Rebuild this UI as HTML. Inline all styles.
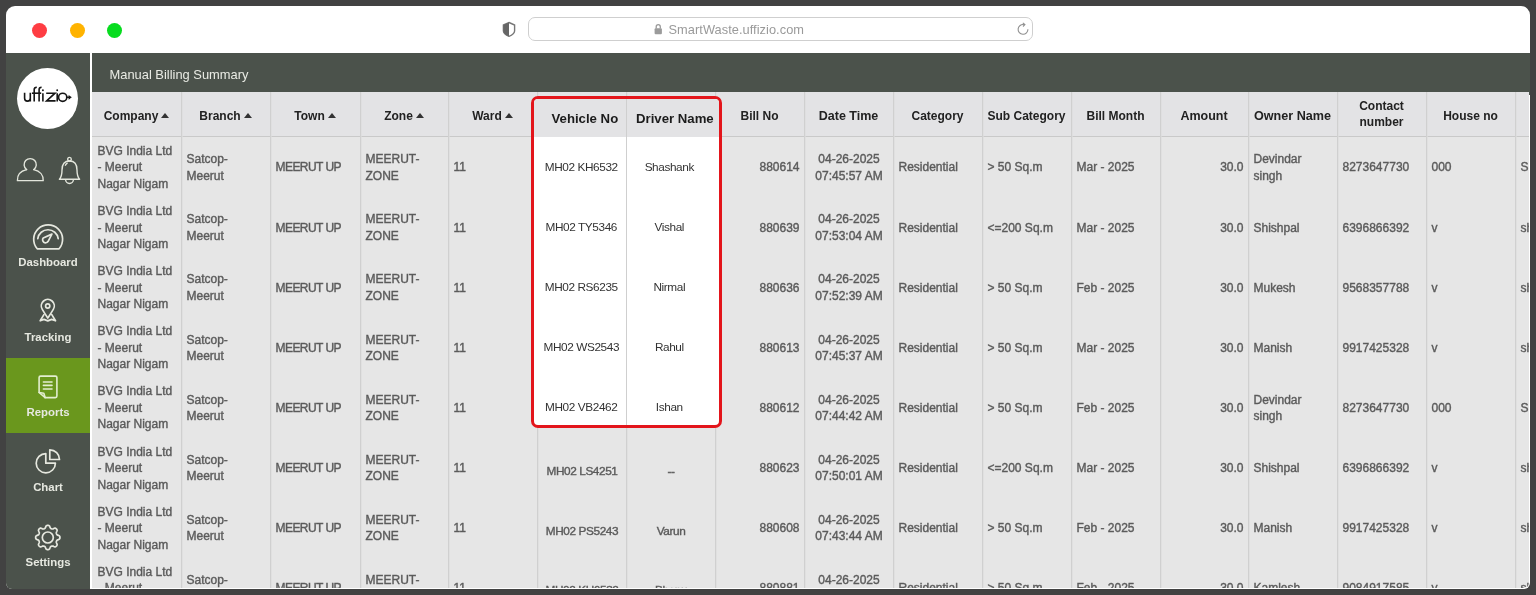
<!DOCTYPE html>
<html><head><meta charset="utf-8">
<style>
*{box-sizing:border-box;margin:0;padding:0}
html,body{width:1536px;height:595px;overflow:hidden;background:#424242;font-family:"Liberation Sans",sans-serif}
.win{position:absolute;left:6px;top:6px;width:1524px;height:583px;background:#fff;border-radius:9px 9px 6px 6px;overflow:hidden}
.abs{position:absolute}
.clip{position:absolute;left:0;top:0;width:1529px;height:588px;overflow:hidden;clip-path:inset(92px 0 0 92px round 0 0 5px 0)}
.dot{position:absolute;width:15px;height:15px;border-radius:50%;top:16.5px}
.url{position:absolute;left:522px;top:11px;width:505px;height:23.5px;border:1.2px solid #cfcfcf;border-radius:7px;background:#fff}
.urltxt{position:absolute;left:668.5px;top:22px;font-size:12.8px;color:#9a9a9a;letter-spacing:0.05px}
.side{position:absolute;left:0;top:47px;width:84px;height:536px;background:#4b524b}
.hbar{position:absolute;left:86px;top:47px;width:1438px;height:42px;background:#4b524b}
.htitle{position:absolute;left:103.5px;top:61px;font-size:12.9px;color:#e9ebe4}
.tbl{position:absolute;left:92px;top:92px;width:1438px;height:497px;background:#e6e6e6}
.thead{position:absolute;left:0;top:0;width:1438px;height:44.5px;background:#e3e3e5;border-bottom:1.5px solid #c9c9c9}
.vs{position:absolute;top:92px;width:1px;height:497px;background:#d0d0d0;box-shadow:0.6px 0 0 #dcdcdc}
.hc{position:absolute;top:94.2px;width:88.9px;height:44px;display:flex;align-items:center;justify-content:center;text-align:center;font-weight:bold;font-size:12px;color:#222;line-height:16.6px}
.arr{display:inline-block;width:0;height:0;border-left:4px solid transparent;border-right:4px solid transparent;border-bottom:5.5px solid #333;margin-left:3px;margin-bottom:2px}
.bc{position:absolute;width:88.9px;height:60px;display:flex;align-items:center;font-size:12px;line-height:16.5px;color:#555;padding:0 5.5px;-webkit-text-stroke:0.4px #626262}
.al{justify-content:flex-start;text-align:left}
.ac{justify-content:center;text-align:center}
.ar{justify-content:flex-end;text-align:right}
.tw{letter-spacing:-0.55px}
.vd{font-size:11.8px;letter-spacing:-0.4px;padding-top:6.5px}
.vd8{padding-top:3px}
.box{position:absolute;left:531px;top:96px;width:191px;height:332px;border:3.2px solid #e3151b;border-radius:7px;background:#fff;overflow:hidden}
.boxh{position:absolute;left:0;top:0;width:100%;height:38px;background:#e3e3e5}
.boxsep{position:absolute;left:92px;top:0;width:1px;height:100%;background:#cfcfcf}
.xh{position:absolute;top:12.1px;font-weight:bold;font-size:13.2px;color:#1c1c1c}
.xb{position:absolute;height:60px;display:flex;align-items:center;justify-content:center;font-size:11.8px;letter-spacing:-0.4px;color:#333}
.nav{position:absolute;left:6px;width:84px;height:75px}
.nav .lbl{position:absolute;left:0;width:84px;text-align:center;top:47.6px;font-weight:bold;font-size:11.4px;color:#e6e8e0}
.nav svg{position:absolute;left:0;top:0}
body>*{filter:blur(0.3px)}
</style></head><body>
<div class="win">
  <div class="dot" style="left:25.5px;background:#fe3d43"></div>
  <div class="dot" style="left:63.5px;background:#ffb300"></div>
  <div class="dot" style="left:101px;background:#07dc1f"></div>
  <div class="url"></div>
  <div class="side"></div>
  <div class="hbar"></div>
</div>
<svg class="abs" style="left:0;top:0" width="1536" height="60">
  <path d="M509 22.5 L514.6 25 L514.6 31 Q514.4 34.3 509 36.3 Q503.6 34.3 503.4 31 L503.4 25 Z" fill="none" stroke="#777" stroke-width="1.4"/>
  <path d="M509 22.5 L503.4 25 L503.4 31 Q503.6 34.3 509 36.3 Z" fill="#666"/>
  <rect x="654.6" y="28.3" width="7.3" height="6" rx="1" fill="#9b9b9b"/>
  <path d="M656.2 28.5 V26.8 A2.05 2.2 0 0 1 660.3 26.8 V28.5" fill="none" stroke="#9b9b9b" stroke-width="1.3"/>
  <path d="M1027.9 29.2 A4.9 4.9 0 1 1 1023.9 24.6" fill="none" stroke="#8f8f8f" stroke-width="1.1"/>
  <path d="M1022.8 22.9 L1024.9 24.6 L1023 26.5" fill="none" stroke="#8f8f8f" stroke-width="1.1"/>
</svg>
<div class="urltxt">SmartWaste.uffizio.com</div>
<div class="htitle" style="left:109.5px;top:67px">Manual Billing Summary</div>
<div class="clip">
<div class="tbl"><div class="thead"></div></div>
<div class="vs" style="left:181px"></div><div class="vs" style="left:270px"></div><div class="vs" style="left:360px"></div><div class="vs" style="left:448px"></div><div class="vs" style="left:537px"></div><div class="vs" style="left:626px"></div><div class="vs" style="left:715px"></div><div class="vs" style="left:804px"></div><div class="vs" style="left:893px"></div><div class="vs" style="left:982px"></div><div class="vs" style="left:1071px"></div><div class="vs" style="left:1160px"></div><div class="vs" style="left:1248px"></div><div class="vs" style="left:1337px"></div><div class="vs" style="left:1426px"></div><div class="vs" style="left:1515px"></div>
<div class="hc" style="left:92px;width:89px">Company<span class="arr"></span></div><div class="hc" style="left:181px;width:89px">Branch<span class="arr"></span></div><div class="hc" style="left:270px;width:90px">Town<span class="arr"></span></div><div class="hc" style="left:360px;width:88px">Zone<span class="arr"></span></div><div class="hc" style="left:448px;width:89px">Ward<span class="arr"></span></div><div class="hc" style="left:715px;width:89px">Bill No</div><div class="hc" style="left:804px;width:89px"><span style="font-size:12.5px">Date Time</span></div><div class="hc" style="left:893px;width:89px">Category</div><div class="hc" style="left:982px;width:89px">Sub Category</div><div class="hc" style="left:1071px;width:89px">Bill Month</div><div class="hc" style="left:1160px;width:88px"><span style="font-size:12.5px">Amount</span></div><div class="hc" style="left:1248px;width:89px"><span style="font-size:12.6px">Owner Name</span></div><div class="hc" style="left:1337px;width:89px;margin-top:-1.8px">Contact<br>number</div><div class="hc" style="left:1426px;width:89px">House no</div><div class="hc" style="left:1515px;width:89px"></div>
<div class="bc al" style="left:92px;width:90px;top:137.7px">BVG India Ltd<br>- Meerut<br>Nagar Nigam</div><div class="bc al" style="left:181px;width:90px;top:137.7px">Satcop-<br>Meerut</div><div class="bc al tw" style="left:270px;width:91px;top:137.7px">MEERUT UP</div><div class="bc al" style="left:360px;width:89px;top:137.7px">MEERUT-<br>ZONE</div><div class="bc al" style="left:448px;width:90px;top:137.7px">11</div><div class="bc ar" style="left:715px;width:90px;top:137.7px">880614</div><div class="bc ac" style="left:804px;width:90px;top:137.7px">04-26-2025<br>07:45:57 AM</div><div class="bc al" style="left:893px;width:90px;top:137.7px">Residential</div><div class="bc al" style="left:982px;width:90px;top:137.7px">&gt; 50 Sq.m</div><div class="bc al" style="left:1071px;width:90px;top:137.7px">Mar - 2025</div><div class="bc ar" style="left:1160px;width:89px;top:137.7px">30.0</div><div class="bc al" style="left:1248px;width:90px;top:137.7px">Devindar<br>singh</div><div class="bc al" style="left:1337px;width:90px;top:137.7px">8273647730</div><div class="bc al" style="left:1426px;width:90px;top:137.7px">000</div><div class="bc al" style="left:1515px;width:90px;top:137.7px">Sh</div><div class="bc al" style="left:92px;width:90px;top:197.8px">BVG India Ltd<br>- Meerut<br>Nagar Nigam</div><div class="bc al" style="left:181px;width:90px;top:197.8px">Satcop-<br>Meerut</div><div class="bc al tw" style="left:270px;width:91px;top:197.8px">MEERUT UP</div><div class="bc al" style="left:360px;width:89px;top:197.8px">MEERUT-<br>ZONE</div><div class="bc al" style="left:448px;width:90px;top:197.8px">11</div><div class="bc ar" style="left:715px;width:90px;top:197.8px">880639</div><div class="bc ac" style="left:804px;width:90px;top:197.8px">04-26-2025<br>07:53:04 AM</div><div class="bc al" style="left:893px;width:90px;top:197.8px">Residential</div><div class="bc al" style="left:982px;width:90px;top:197.8px">&lt;=200 Sq.m</div><div class="bc al" style="left:1071px;width:90px;top:197.8px">Mar - 2025</div><div class="bc ar" style="left:1160px;width:89px;top:197.8px">30.0</div><div class="bc al" style="left:1248px;width:90px;top:197.8px">Shishpal</div><div class="bc al" style="left:1337px;width:90px;top:197.8px">6396866392</div><div class="bc al" style="left:1426px;width:90px;top:197.8px">v</div><div class="bc al" style="left:1515px;width:90px;top:197.8px">sh</div><div class="bc al" style="left:92px;width:90px;top:257.9px">BVG India Ltd<br>- Meerut<br>Nagar Nigam</div><div class="bc al" style="left:181px;width:90px;top:257.9px">Satcop-<br>Meerut</div><div class="bc al tw" style="left:270px;width:91px;top:257.9px">MEERUT UP</div><div class="bc al" style="left:360px;width:89px;top:257.9px">MEERUT-<br>ZONE</div><div class="bc al" style="left:448px;width:90px;top:257.9px">11</div><div class="bc ar" style="left:715px;width:90px;top:257.9px">880636</div><div class="bc ac" style="left:804px;width:90px;top:257.9px">04-26-2025<br>07:52:39 AM</div><div class="bc al" style="left:893px;width:90px;top:257.9px">Residential</div><div class="bc al" style="left:982px;width:90px;top:257.9px">&gt; 50 Sq.m</div><div class="bc al" style="left:1071px;width:90px;top:257.9px">Feb - 2025</div><div class="bc ar" style="left:1160px;width:89px;top:257.9px">30.0</div><div class="bc al" style="left:1248px;width:90px;top:257.9px">Mukesh</div><div class="bc al" style="left:1337px;width:90px;top:257.9px">9568357788</div><div class="bc al" style="left:1426px;width:90px;top:257.9px">v</div><div class="bc al" style="left:1515px;width:90px;top:257.9px">sh</div><div class="bc al" style="left:92px;width:90px;top:318.1px">BVG India Ltd<br>- Meerut<br>Nagar Nigam</div><div class="bc al" style="left:181px;width:90px;top:318.1px">Satcop-<br>Meerut</div><div class="bc al tw" style="left:270px;width:91px;top:318.1px">MEERUT UP</div><div class="bc al" style="left:360px;width:89px;top:318.1px">MEERUT-<br>ZONE</div><div class="bc al" style="left:448px;width:90px;top:318.1px">11</div><div class="bc ar" style="left:715px;width:90px;top:318.1px">880613</div><div class="bc ac" style="left:804px;width:90px;top:318.1px">04-26-2025<br>07:45:37 AM</div><div class="bc al" style="left:893px;width:90px;top:318.1px">Residential</div><div class="bc al" style="left:982px;width:90px;top:318.1px">&gt; 50 Sq.m</div><div class="bc al" style="left:1071px;width:90px;top:318.1px">Mar - 2025</div><div class="bc ar" style="left:1160px;width:89px;top:318.1px">30.0</div><div class="bc al" style="left:1248px;width:90px;top:318.1px">Manish</div><div class="bc al" style="left:1337px;width:90px;top:318.1px">9917425328</div><div class="bc al" style="left:1426px;width:90px;top:318.1px">v</div><div class="bc al" style="left:1515px;width:90px;top:318.1px">sh</div><div class="bc al" style="left:92px;width:90px;top:378.2px">BVG India Ltd<br>- Meerut<br>Nagar Nigam</div><div class="bc al" style="left:181px;width:90px;top:378.2px">Satcop-<br>Meerut</div><div class="bc al tw" style="left:270px;width:91px;top:378.2px">MEERUT UP</div><div class="bc al" style="left:360px;width:89px;top:378.2px">MEERUT-<br>ZONE</div><div class="bc al" style="left:448px;width:90px;top:378.2px">11</div><div class="bc ar" style="left:715px;width:90px;top:378.2px">880612</div><div class="bc ac" style="left:804px;width:90px;top:378.2px">04-26-2025<br>07:44:42 AM</div><div class="bc al" style="left:893px;width:90px;top:378.2px">Residential</div><div class="bc al" style="left:982px;width:90px;top:378.2px">&gt; 50 Sq.m</div><div class="bc al" style="left:1071px;width:90px;top:378.2px">Feb - 2025</div><div class="bc ar" style="left:1160px;width:89px;top:378.2px">30.0</div><div class="bc al" style="left:1248px;width:90px;top:378.2px">Devindar<br>singh</div><div class="bc al" style="left:1337px;width:90px;top:378.2px">8273647730</div><div class="bc al" style="left:1426px;width:90px;top:378.2px">000</div><div class="bc al" style="left:1515px;width:90px;top:378.2px">Sh</div><div class="bc al" style="left:92px;width:90px;top:438.3px">BVG India Ltd<br>- Meerut<br>Nagar Nigam</div><div class="bc al" style="left:181px;width:90px;top:438.3px">Satcop-<br>Meerut</div><div class="bc al tw" style="left:270px;width:91px;top:438.3px">MEERUT UP</div><div class="bc al" style="left:360px;width:89px;top:438.3px">MEERUT-<br>ZONE</div><div class="bc al" style="left:448px;width:90px;top:438.3px">11</div><div class="bc ac vd" style="left:537px;width:90px;top:438.3px">MH02 LS4251</div><div class="bc ac vd" style="left:626px;width:90px;top:438.3px">--</div><div class="bc ar" style="left:715px;width:90px;top:438.3px">880623</div><div class="bc ac" style="left:804px;width:90px;top:438.3px">04-26-2025<br>07:50:01 AM</div><div class="bc al" style="left:893px;width:90px;top:438.3px">Residential</div><div class="bc al" style="left:982px;width:90px;top:438.3px">&lt;=200 Sq.m</div><div class="bc al" style="left:1071px;width:90px;top:438.3px">Mar - 2025</div><div class="bc ar" style="left:1160px;width:89px;top:438.3px">30.0</div><div class="bc al" style="left:1248px;width:90px;top:438.3px">Shishpal</div><div class="bc al" style="left:1337px;width:90px;top:438.3px">6396866392</div><div class="bc al" style="left:1426px;width:90px;top:438.3px">v</div><div class="bc al" style="left:1515px;width:90px;top:438.3px">sh</div><div class="bc al" style="left:92px;width:90px;top:498.4px">BVG India Ltd<br>- Meerut<br>Nagar Nigam</div><div class="bc al" style="left:181px;width:90px;top:498.4px">Satcop-<br>Meerut</div><div class="bc al tw" style="left:270px;width:91px;top:498.4px">MEERUT UP</div><div class="bc al" style="left:360px;width:89px;top:498.4px">MEERUT-<br>ZONE</div><div class="bc al" style="left:448px;width:90px;top:498.4px">11</div><div class="bc ac vd" style="left:537px;width:90px;top:498.4px">MH02 PS5243</div><div class="bc ac vd" style="left:626px;width:90px;top:498.4px">Varun</div><div class="bc ar" style="left:715px;width:90px;top:498.4px">880608</div><div class="bc ac" style="left:804px;width:90px;top:498.4px">04-26-2025<br>07:43:44 AM</div><div class="bc al" style="left:893px;width:90px;top:498.4px">Residential</div><div class="bc al" style="left:982px;width:90px;top:498.4px">&gt; 50 Sq.m</div><div class="bc al" style="left:1071px;width:90px;top:498.4px">Feb - 2025</div><div class="bc ar" style="left:1160px;width:89px;top:498.4px">30.0</div><div class="bc al" style="left:1248px;width:90px;top:498.4px">Manish</div><div class="bc al" style="left:1337px;width:90px;top:498.4px">9917425328</div><div class="bc al" style="left:1426px;width:90px;top:498.4px">v</div><div class="bc al" style="left:1515px;width:90px;top:498.4px">sh</div><div class="bc al" style="left:92px;width:90px;top:558.5px">BVG India Ltd<br>- Meerut<br>Nagar Nigam</div><div class="bc al" style="left:181px;width:90px;top:558.5px">Satcop-<br>Meerut</div><div class="bc al tw" style="left:270px;width:91px;top:558.5px">MEERUT UP</div><div class="bc al" style="left:360px;width:89px;top:558.5px">MEERUT-<br>ZONE</div><div class="bc al" style="left:448px;width:90px;top:558.5px">11</div><div class="bc ac vd vd8" style="left:537px;width:90px;top:558.5px">MH02 KH6532</div><div class="bc ac vd vd8" style="left:626px;width:90px;top:558.5px">Bhanu</div><div class="bc ar" style="left:715px;width:90px;top:558.5px">880881</div><div class="bc ac" style="left:804px;width:90px;top:558.5px">04-26-2025<br>07:40:11 AM</div><div class="bc al" style="left:893px;width:90px;top:558.5px">Residential</div><div class="bc al" style="left:982px;width:90px;top:558.5px">&gt; 50 Sq.m</div><div class="bc al" style="left:1071px;width:90px;top:558.5px">Feb - 2025</div><div class="bc ar" style="left:1160px;width:89px;top:558.5px">30.0</div><div class="bc al" style="left:1248px;width:90px;top:558.5px">Kamlesh</div><div class="bc al" style="left:1337px;width:90px;top:558.5px">9084917585</div><div class="bc al" style="left:1426px;width:90px;top:558.5px">v</div><div class="bc al" style="left:1515px;width:90px;top:558.5px">sh</div>
<div class="box">
  <div class="boxh"></div>
  <div class="boxsep"></div>
  <div class="xh" style="left:17.5px">Vehicle No</div>
  <div class="xh" style="left:102px">Driver Name</div>
  <div class="xb" style="left:1px;top:37.6px;width:92.5px">MH02 KH6532</div><div class="xb" style="left:92.8px;top:37.6px;width:85px">Shashank</div><div class="xb" style="left:1px;top:97.7px;width:92.5px">MH02 TY5346</div><div class="xb" style="left:92.8px;top:97.7px;width:85px">Vishal</div><div class="xb" style="left:1px;top:157.8px;width:92.5px">MH02 RS6235</div><div class="xb" style="left:92.8px;top:157.8px;width:85px">Nirmal</div><div class="xb" style="left:1px;top:218.0px;width:92.5px">MH02 WS2543</div><div class="xb" style="left:92.8px;top:218.0px;width:85px">Rahul</div><div class="xb" style="left:1px;top:278.1px;width:92.5px">MH02 VB2462</div><div class="xb" style="left:92.8px;top:278.1px;width:85px">Ishan</div>
</div>
</div>
<!-- sidebar -->
<svg class="abs" style="left:0;top:0" width="92" height="595">
  <circle cx="47.5" cy="98.5" r="30.5" fill="#fff"/>
  <g fill="none" stroke="#e3e6dc" stroke-width="1.4" stroke-linecap="round" stroke-linejoin="round">
    <path d="M26.6 169.6 A6.1 6.1 0 1 1 33.8 169.6"/>
    <path d="M26.6 169.6 C20.3 171 17.2 175.5 17.4 180.6 L43.2 180.6 C43.4 175.5 40.2 171 33.8 169.6"/>
    <circle cx="69.5" cy="159.2" r="1.8"/>
    <path d="M69.5 161 C64 161 62 165 62 170 C62 174.5 61.5 177 59.4 179.2 L79.6 179.2 C77.5 177 77 174.5 77 170 C77 165 75 161 69.5 161 Z"/>
    <path d="M65.6 179.6 A3.9 3.9 0 0 0 73.4 179.6"/>
    <path d="M65.4 165.2 Q66.1 163.8 67.2 163.2"/>
  </g>
</svg>
<svg class="abs" style="left:0;top:0" width="92" height="595">
<g stroke="#151515" stroke-width="1.6" fill="none" stroke-linecap="butt">
  <path d="M24.6 92.8 V98.2 A2.85 2.9 0 0 0 30.3 98.2 M30.3 92.8 V101.6"/>
  <path d="M34.2 101.6 V89.6 Q34.2 87.2 36.8 87.2"/>
  <path d="M39.1 101.6 V89.6 Q39.1 87.2 41.6 87.2"/>
  <path d="M31.9 93.2 H41.2"/>
  <path d="M42.9 93.2 V101.6"/>
  <path d="M46.2 93.2 H55 L46.6 100.9 H55.6"/>
  <path d="M57.2 93.2 V101.6"/>
  <circle cx="62.7" cy="97.3" r="4.1"/>
  <path d="M66.8 97.3 H69.8"/>
</g>
<circle cx="42.9" cy="90.3" r="0.95" fill="#151515"/>
<circle cx="57.2" cy="90.3" r="0.95" fill="#151515"/>
<path d="M68.6 94.9 L71.8 97.3 L68.6 99.7 Z" fill="#151515"/>
</svg>
<div class="abs" style="left:6px;top:358px;width:84px;height:75px;background:#6a971d"></div>
<div class="nav" style="top:208px"><div class="lbl">Dashboard</div></div>
<div class="nav" style="top:283px"><div class="lbl">Tracking</div></div>
<div class="nav" style="top:358px"><div class="lbl">Reports</div></div>
<div class="nav" style="top:433px"><div class="lbl">Chart</div></div>
<div class="nav" style="top:508px"><div class="lbl">Settings</div></div>
<svg class="abs" style="left:0;top:0" width="92" height="595">
<g fill="none" stroke="#e6e8df" stroke-width="1.7" stroke-linecap="round" stroke-linejoin="round">
  <path d="M37.2 248.8 A14.45 14.45 0 1 1 59.1 248.8 Z"/>
  <path d="M37.8 238.6 A10.3 10.3 0 0 1 58.2 238.6"/>
  <path d="M43.2 238.0 A2.9 2.9 0 1 0 48.0 241.6 L51.9 234.1 Z"/>
  <path d="M47.8 318 Q46 315.5 42.3 309.4 A6.5 6.5 0 1 1 53.3 309.4 Q49.6 315.5 47.8 318 Z"/>
  <circle cx="47.7" cy="306" r="2.1"/>
  <path d="M43.9 314.6 L40.2 320.8 L44 319.4 L47.8 320.9 L51.6 319.4 L55.5 320.8 L51.8 314.6"/>
</g>
<g fill="none" stroke="#e3eecf" stroke-width="1.6" stroke-linecap="round" stroke-linejoin="round">
  <path d="M45.1 397.6 L55.4 397.6 Q56.9 397.6 56.9 396.1 L56.9 377.6 Q56.9 376.1 55.4 376.1 L40.6 376.1 Q39.1 376.1 39.1 377.6 L39.1 392.5 Z"/>
  <path d="M39.1 392.5 L43.8 393.2 L45.1 397.6"/>
  <path d="M43.4 382 H52 M43.4 385.4 H52 M43.4 389 H52"/>
</g>
<g fill="none" stroke="#e6e8df" stroke-width="1.7" stroke-linecap="round" stroke-linejoin="round">
  <path d="M45.8 453.6 A9.6 9.6 0 1 0 55.4 463.2 L45.8 463.2 Z"/>
  <path d="M49.8 449.8 L49.8 459.5 L59.5 459.5 A9.7 9.7 0 0 0 49.8 449.8 Z"/>
  <path d="M59.95 537.50 L59.92 537.98 L59.82 538.45 L59.59 538.90 L59.13 539.29 L58.39 539.61 L57.65 539.86 L57.16 540.14 L56.87 540.45 L56.68 540.78 L56.53 541.12 L56.40 541.46 L56.30 541.83 L56.28 542.25 L56.44 542.79 L56.78 543.50 L57.08 544.24 L57.13 544.85 L56.97 545.33 L56.71 545.73 L56.39 546.09 L56.03 546.41 L55.63 546.67 L55.15 546.83 L54.54 546.78 L53.80 546.48 L53.09 546.14 L52.55 545.98 L52.13 546.00 L51.76 546.10 L51.42 546.23 L51.08 546.38 L50.75 546.57 L50.44 546.86 L50.16 547.35 L49.91 548.09 L49.59 548.83 L49.20 549.29 L48.75 549.52 L48.28 549.62 L47.80 549.65 L47.32 549.62 L46.85 549.52 L46.40 549.29 L46.01 548.83 L45.69 548.09 L45.44 547.35 L45.16 546.86 L44.85 546.57 L44.52 546.38 L44.18 546.23 L43.84 546.10 L43.47 546.00 L43.05 545.98 L42.51 546.14 L41.80 546.48 L41.06 546.78 L40.45 546.83 L39.97 546.67 L39.57 546.41 L39.21 546.09 L38.89 545.73 L38.63 545.33 L38.47 544.85 L38.52 544.24 L38.82 543.50 L39.16 542.79 L39.32 542.25 L39.30 541.83 L39.20 541.46 L39.07 541.12 L38.92 540.78 L38.73 540.45 L38.44 540.14 L37.95 539.86 L37.21 539.61 L36.47 539.29 L36.01 538.90 L35.78 538.45 L35.68 537.98 L35.65 537.50 L35.68 537.02 L35.78 536.55 L36.01 536.10 L36.47 535.71 L37.21 535.39 L37.95 535.14 L38.44 534.86 L38.73 534.55 L38.92 534.22 L39.07 533.88 L39.20 533.54 L39.30 533.17 L39.32 532.75 L39.16 532.21 L38.82 531.50 L38.52 530.76 L38.47 530.15 L38.63 529.67 L38.89 529.27 L39.21 528.91 L39.57 528.59 L39.97 528.33 L40.45 528.17 L41.06 528.22 L41.80 528.52 L42.51 528.86 L43.05 529.02 L43.47 529.00 L43.84 528.90 L44.18 528.77 L44.52 528.62 L44.85 528.43 L45.16 528.14 L45.44 527.65 L45.69 526.91 L46.01 526.17 L46.40 525.71 L46.85 525.48 L47.32 525.38 L47.80 525.35 L48.28 525.38 L48.75 525.48 L49.20 525.71 L49.59 526.17 L49.91 526.91 L50.16 527.65 L50.44 528.14 L50.75 528.43 L51.08 528.62 L51.42 528.77 L51.76 528.90 L52.13 529.00 L52.55 529.02 L53.09 528.86 L53.80 528.52 L54.54 528.22 L55.15 528.17 L55.63 528.33 L56.03 528.59 L56.39 528.91 L56.71 529.27 L56.97 529.67 L57.13 530.15 L57.08 530.76 L56.78 531.50 L56.44 532.21 L56.28 532.75 L56.30 533.17 L56.40 533.54 L56.53 533.88 L56.68 534.22 L56.87 534.55 L57.16 534.86 L57.65 535.14 L58.39 535.39 L59.13 535.71 L59.59 536.10 L59.82 536.55 L59.92 537.02 Z"/>
  <circle cx="47.8" cy="537.5" r="5.5"/>
</g>
</svg>
</body></html>
